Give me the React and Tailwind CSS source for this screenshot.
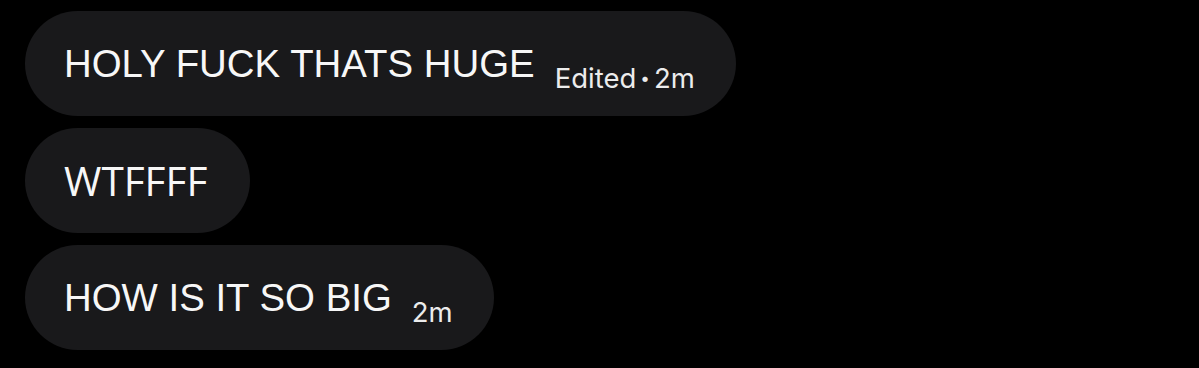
import React from "react";

const messages = [
  { id: 1, text: "HOLY FUCK THATS HUGE", edited: true, time: "2m" },
  { id: 2, text: "WTFFFF", time: null, alt: true },
  { id: 3, text: "HOW IS IT SO BIG", time: "2m" },
];

const Bubble = ({ text, edited, time, alt }) => {
  return (
    <div className="h-[105px] rounded-full bg-[#19191b] pl-[39px] pr-[41px] pt-[34px]">
      <div className="flex items-end gap-[20px]">
        <span
          className={
            alt
              ? "text-[40.5px] leading-[38px] text-[#f7f7f7] font-['Open_Sans',sans-serif] pb-2 pr-[2px]"
              : "text-[38.4px] leading-none text-[#f7f7f7] font-['Liberation_Sans',Arial,sans-serif] pb-2"
          }
        >
          {text}
        </span>
        {time && (
          <span className="flex items-center text-[27.5px] leading-none text-[#ececec] font-['Inter',sans-serif] whitespace-nowrap mb-[-1px]">
            {edited && (
              <>
                <span>Edited</span>
                <span className="mx-[4px] text-[17px]">•</span>
              </>
            )}
            <span>{time}</span>
          </span>
        )}
      </div>
    </div>
  );
};

const App = () => {
  return (
    <div className="w-[1199px] h-[368px] bg-black overflow-hidden">
      <div className="flex flex-col items-start gap-[12px] pl-[25px] pt-[11px]">
        {messages.map((m) => (
          <Bubble key={m.id} {...m} />
        ))}
      </div>
    </div>
  );
};

export default App;
